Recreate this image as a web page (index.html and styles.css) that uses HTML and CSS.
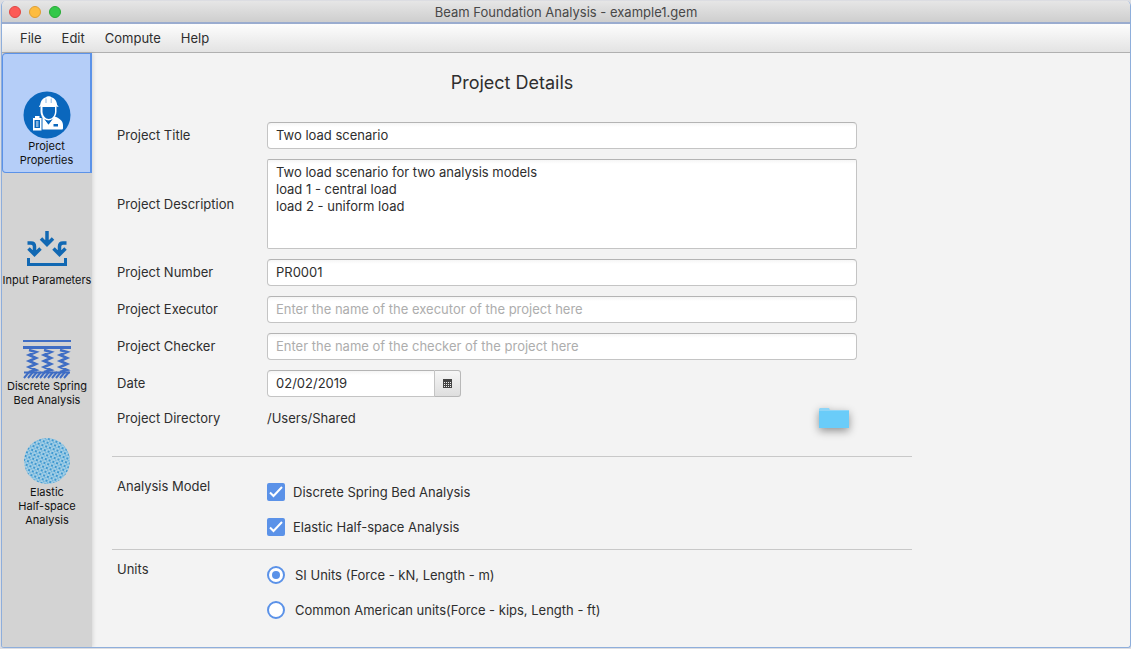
FILE: index.html
```
<!DOCTYPE html>
<html lang="en">
<head>
  <meta charset="UTF-8">
  <title>Beam Foundation Analysis - example1.gem</title>
  <meta name="viewport" content="width=device-width, initial-scale=1.0">
  <link rel="stylesheet" href="styles.css">
</head>
<body>
  <div class="window">
    <header class="titlebar">
      <div class="lights">
        <button class="light close" aria-label="Close"></button>
        <button class="light minimize" aria-label="Minimize"></button>
        <button class="light maximize" aria-label="Zoom"></button>
      </div>
      <span class="title">Beam Foundation Analysis - example1.gem</span>
    </header>

    <nav class="menubar">
      <button>File</button>
      <button>Edit</button>
      <button>Compute</button>
      <button>Help</button>
    </nav>

    <div class="workspace">
      <aside class="sidebar">
        <button class="tab active">
          <svg width="48" height="48" viewBox="0 0 48 48">
            <circle cx="24" cy="24" r="23.5" fill="#0a67bd"/>
            <path d="M17.5 13.5h16v7c0 5-4 9-8 9s-8-4-8-9z" fill="#fff"/>
            <path d="M19.5 16h12.5v4.500c0 4-3 7.500-6.200 7.500s-6.300-3.500-6.300-7.500z" fill="#0a67bd"/>
            <path d="M16 16c0-1.200.5-1.700 1.200-1.800.3-4.600 3-7.500 6.300-8.300.2-.8 4.200-.8 4.400 0 3.300.8 6 3.700 6.300 8.300.7.1 1.200.6 1.200 1.800-3-1.200-16.400-1.200-19.400 0z" fill="#fff"/>
            <path d="M23 7.500v4.500M28.200 7.500v4.500" stroke="#8db9e4" stroke-width="1"/>
            <path d="M13 38.500V30c0-2 4-4 6.500-4.500l6 8 6-8c4.500 1.500 8.500 4 8.500 8.500v3c0 1-.5 1.500-1.500 1.500z" fill="#fff"/>
            <path d="M21.500 28c2.500 2.500 5.500 2.500 8 0l-4 5.500z" fill="#0a67bd"/>
            <path d="M30.500 33h4.500v2.500h-4.500z" fill="#0a67bd"/>
            <path d="M9.500 26.500h9.500V40H9.500z" fill="#fff" stroke="#0a67bd" stroke-width="1"/>
            <path d="M11.500 29h5.500v8h-5.500z" fill="#0a67bd"/>
            <path d="M13 31h2.500M13 33h2.500M13 35h2.500" stroke="#fff"/>
            <path d="M12 25h4.500v3H12z" fill="#fff"/>
          </svg>
          <span>Project<br>Properties</span>
        </button>

        <button class="tab">
          <svg width="48" height="48" viewBox="0 0 48 48" fill="none" stroke="#1168b3" stroke-width="3.500">
            <path d="M5.500 33v6.500h37V33" stroke-width="3"/>
            <path d="M24 6v13M18 13.500l6 6 6-6"/>
            <path d="M4.500 18H8q3.500 0 3.500 3.500V29M5.500 23.500l6 6 6-6"/>
            <path d="M43.500 18H40q-3.500 0-3.500 3.500V29M30.500 23.500l6 6 6-6"/>
          </svg>
          <span>Input Parameters</span>
        </button>

        <button class="tab">
          <svg width="48" height="48" viewBox="0 0 48 48" fill="none" stroke="#3f6dc4">
            <path d="M0 10h48" stroke-width="2"/>
            <path d="M0 16.500h48" stroke-width="3"/>
            <path d="M1 41.500h46" stroke-width="2"/>
            <path d="M6 19l7 2-7 3 7 3-7 3 7 3-7 3 7 3-7 2M21 19l7 2-7 3 7 3-7 3 7 3-7 3 7 3-7 2M37 19l7 2-7 3 7 3-7 3 7 3-7 3 7 3-7 2" stroke-width="2.500"/>
            <path d="M1 47l5-6M5 47l5-6M9 47l5-6M13 47l5-6M17 47l5-6M21 47l5-6M25 47l5-6M29 47l5-6M33 47l5-6M37 47l5-6M41 47l5-6" stroke-width="2"/>
          </svg>
          <span>Discrete Spring<br>Bed Analysis</span>
        </button>

        <button class="tab">
          <svg width="48" height="48" viewBox="0 0 48 48">
            <defs>
              <pattern id="mesh" width="4" height="4" patternUnits="userSpaceOnUse" patternTransform="rotate(20)">
                <path d="M0 0h4v4H0z" fill="#a4cfe6"/>
                <path d="M0 0h2v2H0z" fill="#3f98d0"/>
                <path d="M2 2h1.500v1.500H2z" fill="#68b0db"/>
              </pattern>
            </defs>
            <circle cx="24" cy="24" r="23" fill="url(#mesh)"/>
          </svg>
          <span>Elastic<br>Half-space<br>Analysis</span>
        </button>
      </aside>

      <main class="content">
        <form class="details">
          <h1>Project Details</h1>

          <div class="fields">
            <label for="projectTitle">Project Title</label>
            <input class="field" type="text" id="projectTitle" value="Two load scenario">

            <label for="projectDescription">Project Description</label>
            <textarea class="field" id="projectDescription">Two load scenario for two analysis models
load 1 - central load
load 2 - uniform load</textarea>

            <label for="projectNumber">Project Number</label>
            <input class="field" type="text" id="projectNumber" value="PR0001">

            <label for="projectExecutor">Project Executor</label>
            <input class="field" type="text" id="projectExecutor" placeholder="Enter the name of the executor of the project here">

            <label for="projectChecker">Project Checker</label>
            <input class="field" type="text" id="projectChecker" placeholder="Enter the name of the checker of the project here">

            <label for="projectDate">Date</label>
            <div class="date-picker">
              <input class="field" type="text" id="projectDate" value="02/02/2019">
              <button type="button" aria-label="Pick a date">
                <svg width="9" height="9" viewBox="0 0 9 9">
                  <path d="M0 0h9v9H0z" fill="#444"/>
                  <path d="M1 3.500h7M1 5.500h7M1 7.500h7" stroke="#eee" stroke-dasharray="1 1"/>
                </svg>
              </button>
            </div>

            <span>Project Directory</span>
            <div class="directory">
              <span>/Users/Shared</span>
              <button type="button" class="folder" aria-label="Choose directory">
                <svg width="30" height="20" viewBox="0 0 30 20">
                  <path d="M0 1l1-1h9l1 2h19v3H0z" fill="#8ed5f7"/>
                  <path d="M0 3h30v17H0z" fill="#6accf9"/>
                </svg>
              </button>
            </div>
          </div>

          <fieldset class="group">
            <legend>Analysis Model</legend>
            <div class="choices">
              <label><input type="checkbox" checked>Discrete Spring Bed Analysis</label>
              <label><input type="checkbox" checked>Elastic Half-space Analysis</label>
            </div>
          </fieldset>

          <fieldset class="group units">
            <legend>Units</legend>
            <div class="choices">
              <label><input type="radio" name="units" checked>SI Units (Force - kN, Length - m)</label>
              <label><input type="radio" name="units">Common American units(Force - kips, Length - ft)</label>
            </div>
          </fieldset>
        </form>
      </main>
    </div>
  </div>
</body>
</html>
```
FILE: styles.css
```
:root {
  --accent: #5b92e8;
  --edge: #8eaedb;
  --line: #b8b8b8;
  --bg: #f3f3f3;
  --text: #2e2e2e;
}

* {
  box-sizing: border-box;
}

body {
  margin: 0;
  padding: 1px 0 1px 1px;
  background: #dcdde2;
  font-family: Inter, sans-serif;
  font-size: 13px;
  line-height: 17px;
  color: var(--text);
}

button,
input,
textarea {
  font: inherit;
  color: inherit;
  margin: 0;
}

button {
  padding: 0;
  border: 0;
  background: none;
}

.window {
  display: flex;
  flex-direction: column;
  min-height: calc(100vh - 2px);
  border: 1px solid var(--edge);
  border-top: 0;
  border-radius: 5px 5px 3px 3px;
  background: var(--bg);
  overflow: hidden;
}

.titlebar {
  display: grid;
  grid-template-columns: 1fr auto 1fr;
  align-items: center;
  height: 23px;
  padding-top: 1px;
  background: linear-gradient(#e6e6e6, #cecece);
  border-bottom: 2px solid #9aaccf;
  color: #484848;
}

.lights {
  display: flex;
  gap: 8px;
  padding-left: 7px;
}

.light {
  width: 12px;
  height: 12px;
  border-radius: 50%;
}

.close {
  background: #fc5b57;
  border: 1px solid #df4744;
}

.minimize {
  background: #fdbc40;
  border: 1px solid #de9f34;
}

.maximize {
  background: #34c84a;
  border: 1px solid #27aa35;
}

.menubar {
  display: flex;
  gap: 20px;
  height: 29px;
  padding: 0 18px;
  background: linear-gradient(#fdfdfd, #e3e3e3);
  border-bottom: 1px solid #b0b0b0;
}

.workspace {
  display: flex;
  flex: 1;
}

.sidebar {
  flex: none;
  width: 90px;
  background: #d3d3d3;
  box-shadow: 1px 0 4px rgba(0, 0, 0, 0.12);
}

.tab {
  display: flex;
  flex-direction: column;
  align-items: center;
  justify-content: flex-end;
  width: 100%;
  height: 120px;
  padding-bottom: 6px;
  font-size: 11px;
  line-height: 14px;
  color: #111;
  white-space: nowrap;
}

.tab.active {
  background: #b5cef8;
  border: 1px solid var(--accent);
  border-right-width: 2px;
  border-radius: 4px 0 0 4px;
  padding-bottom: 5px;
}

.content {
  flex: 1;
  padding: 19px 20px;
}

.details {
  max-width: 800px;
}

h1 {
  margin: 0 0 28px;
  font-size: 18px;
  font-weight: 400;
  line-height: 22px;
  text-align: center;
}

.fields {
  display: grid;
  grid-template-columns: 150px 1fr;
  align-items: center;
  row-gap: 10px;
  padding: 0 55px 27px 5px;
}

.field {
  width: 100%;
  height: 27px;
  padding: 0 8px 1px;
  border: 1px solid #c4c4c4;
  border-top-color: #b4b4b4;
  border-radius: 4px;
  background: linear-gradient(#f5f5f5, #fff 4px);
}

textarea.field {
  display: block;
  height: 90px;
  padding: 4px 8px;
  border-radius: 2px;
  resize: none;
}

.field::placeholder {
  color: #adadad;
}

.date-picker {
  display: flex;
  width: 194px;
}

.date-picker .field {
  flex: 1;
  min-width: 0;
  border-radius: 4px 0 0 4px;
}

.date-picker button {
  display: grid;
  place-items: center;
  width: 26px;
  border: 1px solid var(--line);
  border-left: 0;
  border-radius: 0 3px 3px 0;
  background: linear-gradient(#f6f6f6, #dedede);
}

.directory {
  display: flex;
  align-items: center;
  justify-content: space-between;
  min-height: 22px;
  padding-right: 8px;
}

.folder svg {
  display: block;
  filter: drop-shadow(0 3px 4px rgba(0, 0, 0, 0.4));
}

.group {
  display: flex;
  margin: 0;
  padding: 26px 5px 13px;
  border: 0;
  border-top: 1px solid #c8c8c8;
}

/* floating takes the legend out of the fieldset border */
.group legend {
  float: left;
  width: 150px;
  padding: 0;
  margin-top: -5px;
}

.group.units {
  padding-top: 16px;
  padding-bottom: 0;
}

.choices {
  display: flex;
  flex-direction: column;
  gap: 17px;
}

.choices label {
  display: flex;
  align-items: center;
  gap: 8px;
  height: 18px;
}

.units .choices label {
  gap: 10px;
}

.choices input {
  appearance: none;
  display: grid;
  place-items: center;
  width: 18px;
  height: 18px;
  border: 2px solid var(--accent);
  background: #fff;
}

.choices input[type="checkbox"] {
  border-radius: 2px;
}

.choices input[type="checkbox"]:checked {
  background: var(--accent) url("data:image/svg+xml,<svg xmlns='http://www.w3.org/2000/svg' viewBox='0 0 14 14'><path d='M1 7.500l3.500 3.500L13 2' fill='none' stroke='white' stroke-width='2'/></svg>") center / 14px no-repeat;
}

.choices input[type="radio"] {
  border-radius: 50%;
}

.choices input[type="radio"]:checked::before {
  content: "";
  width: 8px;
  height: 8px;
  border-radius: 50%;
  background: var(--accent);
}
```
